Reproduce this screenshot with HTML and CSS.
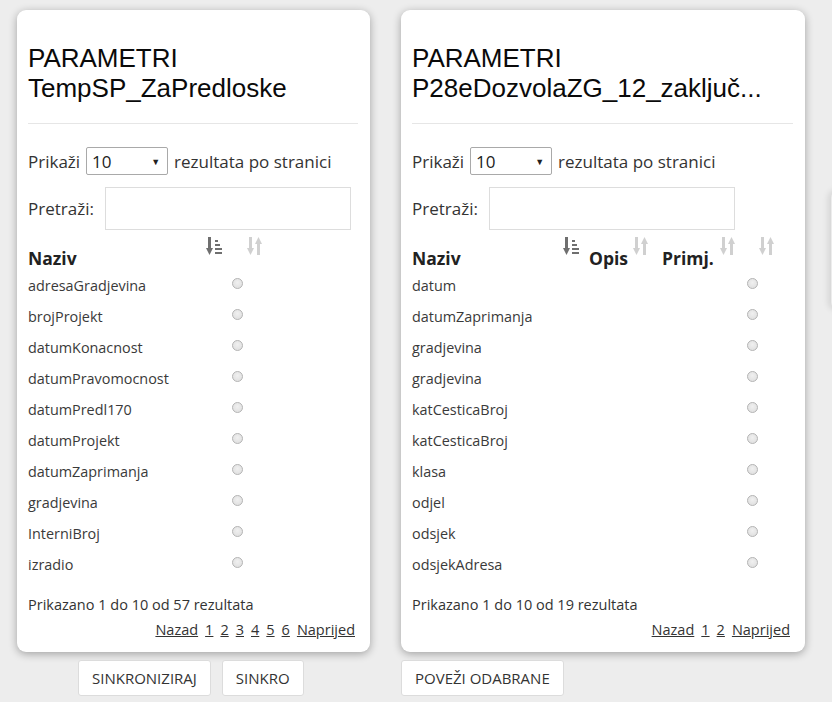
FILE: index.html
```html
<!DOCTYPE html>
<html lang="hr">
<head>
<meta charset="utf-8">
<title>Parametri</title>
<link rel="stylesheet" href="styles.css">
</head>
<body>
<svg width="0" height="0" class="defs">
  <defs>
    <symbol id="i-asc" viewBox="0 0 16 20">
      <rect x="2" y="1" width="3" height="12"/>
      <polygon points="0,12 7,12 3.5,19"/>
      <rect x="9" y="4" width="3" height="2"/>
      <rect x="9" y="8" width="5" height="2"/>
      <rect x="9" y="12" width="7" height="2"/>
      <rect x="9" y="16" width="7" height="2"/>
    </symbol>
    <symbol id="i-both" viewBox="0 0 16 20">
      <rect x="2" y="1" width="3" height="12"/>
      <polygon points="0,12 7,12 3.5,19"/>
      <rect x="10" y="7" width="3" height="12"/>
      <polygon points="8,8 15,8 11.5,1"/>
    </symbol>
  </defs>
</svg>
<div class="page">
  <section class="col col-a">
    <div class="card">
      <h2 class="title"><span class="tl">PARAMETRI</span><span class="tl">TempSP_ZaPredloske</span></h2>
      <hr class="sep">
      <div class="length">Prikaži <span class="select"><span>10</span><span class="caret">▼</span></span> rezultata po stranici</div>
      <div class="search"><span>Pretraži:</span> <span class="input"></span></div>
      <table class="grid grid-a">
        <thead>
          <tr>
            <th class="h-naziv"><div class="hcell"><span class="htext">Naziv</span><svg class="ico dark"><use href="#i-asc"/></svg></div></th>
            <th class="h-sel"><div class="hcell"><span class="htext"></span><svg class="ico light"><use href="#i-both"/></svg></div></th>
          </tr>
        </thead>
        <tbody>
          <tr><td>adresaGradjevina</td><td class="sel"><span class="radio"></span></td></tr>
          <tr><td>brojProjekt</td><td class="sel"><span class="radio"></span></td></tr>
          <tr><td>datumKonacnost</td><td class="sel"><span class="radio"></span></td></tr>
          <tr><td>datumPravomocnost</td><td class="sel"><span class="radio"></span></td></tr>
          <tr><td>datumPredl170</td><td class="sel"><span class="radio"></span></td></tr>
          <tr><td>datumProjekt</td><td class="sel"><span class="radio"></span></td></tr>
          <tr><td>datumZaprimanja</td><td class="sel"><span class="radio"></span></td></tr>
          <tr><td>gradjevina</td><td class="sel"><span class="radio"></span></td></tr>
          <tr><td>InterniBroj</td><td class="sel"><span class="radio"></span></td></tr>
          <tr><td>izradio</td><td class="sel"><span class="radio"></span></td></tr>
        </tbody>
      </table>
      <div class="info">Prikazano 1 do 10 od 57 rezultata</div>
      <div class="pager"><a href="#">Nazad</a><a href="#">1</a><a href="#">2</a><a href="#">3</a><a href="#">4</a><a href="#">5</a><a href="#">6</a><a href="#">Naprijed</a></div>
    </div>
    <div class="actions actions-center">
      <button class="btn">SINKRONIZIRAJ</button>
      <button class="btn">SINKRO</button>
    </div>
  </section>

  <section class="col col-b">
    <div class="card">
      <h2 class="title"><span class="tl">PARAMETRI</span><span class="tl">P28eDozvolaZG_12_zaključ...</span></h2>
      <hr class="sep">
      <div class="length">Prikaži <span class="select"><span>10</span><span class="caret">▼</span></span> rezultata po stranici</div>
      <div class="search"><span>Pretraži:</span> <span class="input"></span></div>
      <table class="grid grid-b">
        <thead>
          <tr>
            <th class="h-naziv"><div class="hcell"><span class="htext">Naziv</span><svg class="ico dark"><use href="#i-asc"/></svg></div></th>
            <th class="h-opis"><div class="hcell"><span class="htext">Opis</span><svg class="ico light"><use href="#i-both"/></svg></div></th>
            <th class="h-primj"><div class="hcell"><span class="htext">Primj.</span><svg class="ico light"><use href="#i-both"/></svg></div></th>
            <th class="h-sel"><div class="hcell"><span class="htext"></span><svg class="ico light"><use href="#i-both"/></svg></div></th>
          </tr>
        </thead>
        <tbody>
          <tr><td>datum</td><td></td><td></td><td class="sel"><span class="radio"></span></td></tr>
          <tr><td>datumZaprimanja</td><td></td><td></td><td class="sel"><span class="radio"></span></td></tr>
          <tr><td>gradjevina</td><td></td><td></td><td class="sel"><span class="radio"></span></td></tr>
          <tr><td>gradjevina</td><td></td><td></td><td class="sel"><span class="radio"></span></td></tr>
          <tr><td>katCesticaBroj</td><td></td><td></td><td class="sel"><span class="radio"></span></td></tr>
          <tr><td>katCesticaBroj</td><td></td><td></td><td class="sel"><span class="radio"></span></td></tr>
          <tr><td>klasa</td><td></td><td></td><td class="sel"><span class="radio"></span></td></tr>
          <tr><td>odjel</td><td></td><td></td><td class="sel"><span class="radio"></span></td></tr>
          <tr><td>odsjek</td><td></td><td></td><td class="sel"><span class="radio"></span></td></tr>
          <tr><td>odsjekAdresa</td><td></td><td></td><td class="sel"><span class="radio"></span></td></tr>
        </tbody>
      </table>
      <div class="info">Prikazano 1 do 10 od 19 rezultata</div>
      <div class="pager"><a href="#">Nazad</a><a href="#">1</a><a href="#">2</a><a href="#">Naprijed</a></div>
    </div>
    <div class="actions">
      <button class="btn">POVEŽI ODABRANE</button>
    </div>
  </section>
  <div class="peek"></div>
</div>
</body>
</html>
```

FILE: styles.css
```css
* { box-sizing: border-box; }
html, body { margin: 0; padding: 0; }
body {
  background: #ededed;
  font-family: "Open Sans", "Noto Sans", "Liberation Sans", sans-serif;
  color: #333;
  overflow: hidden;
  width: 832px;
  height: 702px;
}
.defs { position: absolute; width: 0; height: 0; }
.page {
  display: flex;
  align-items: flex-start;
  gap: 31px;
  padding: 10px 0 0 17px;
}
.col { display: flex; flex-direction: column; flex: none; }
.col-a { width: 353px; }
.col-b { width: 404px; }
.peek {
  flex: none;
  width: 40px;
  height: 120px;
  margin-top: 180px;
  margin-left: -5px;
  background: #ededed;
  border-radius: 8px;
  box-shadow: -3px 0 6px rgba(0,0,0,0.10);
}

.card {
  background: #fff;
  border-radius: 9px;
  box-shadow: 0 2px 9px rgba(0,0,0,0.32);
  padding: 33px 12px 12px 11px;
  height: 642px;
  display: flex;
  flex-direction: column;
}
.title {
  margin: 0;
  font-family: "Liberation Sans", Arial, sans-serif;
  font-weight: 400;
  font-size: 26px;
  line-height: 30px;
  color: #0a0a0a;
  white-space: nowrap;
  display: flex;
  flex-direction: column;
}
.tl {
  display: block;
  height: 30px;
  line-height: 30px;
}
.sep {
  border: 0;
  border-top: 1px solid #e6e6e6;
  margin: 20px 0 0 0;
  height: 0;
}
.length {
  margin-top: 23px;
  display: flex;
  align-items: center;
  gap: 6px;
  font-size: 17px;
  color: #333;
  height: 28px;
}
.select {
  width: 82px;
  height: 28px;
  border: 1px solid #a9a9a9;
  border-radius: 2px;
  display: flex;
  align-items: center;
  justify-content: space-between;
  padding: 0 7px 0 5px;
  font-size: 17px;
  color: #222;
}
.caret { font-size: 9px; color: #222; }
.search {
  margin-top: 12px;
  display: flex;
  align-items: center;
  gap: 11px;
  font-size: 17px;
  color: #333;
}
.input {
  width: 246px;
  height: 43px;
  border: 1px solid #ddd;
  background: #fff;
}
.grid {
  margin-top: 6px;
  border-collapse: collapse;
  table-layout: fixed;
}
.grid-a { width: 238px; }
.grid-b { width: 366px; }
.grid th {
  padding: 0;
  text-align: left;
  vertical-align: top;
  height: 34px;
}
.hcell {
  display: flex;
  justify-content: space-between;
  align-items: flex-start;
  height: 34px;
  padding-right: 3px;
}
.htext {
  align-self: flex-end;
  font-size: 17.5px;
  font-weight: 700;
  color: #222;
  line-height: 22px;
  margin-bottom: 1px;
}
.ico { width: 16px; height: 20px; flex: none; }
.ico.dark { fill: #6f6f6f; }
.ico.light { fill: #d0d0d0; }
.grid td {
  padding: 0;
  height: 31px;
  font-size: 14.4px;
  color: #3a3a3a;
  vertical-align: middle;
  white-space: nowrap;
}
.grid td.sel { padding-bottom: 4px; }
.radio {
  display: block;
  width: 11px;
  height: 11px;
  border-radius: 50%;
  border: 1px solid #b5b5b5;
  background: radial-gradient(circle at 50% 40%, #f0f0f0 0%, #dcdcdc 100%);
}
.grid-a .h-naziv { width: 197px; }
.grid-a .h-sel { width: 41px; }
.grid-a td.sel { padding-left: 7px; }

.grid-b .h-naziv { width: 170px; }
.grid-b .h-opis { width: 68px; }
.grid-b .h-primj { width: 86px; }
.grid-b .h-sel { width: 42px; }
.grid-b .h-opis .hcell { justify-content: flex-start; gap: 5px; padding-left: 7px; }
.grid-b .h-primj .hcell { justify-content: flex-start; gap: 6px; padding-left: 12px; }
.grid-b td.sel { padding-left: 11px; }

.info {
  margin-top: auto;
  font-size: 14.5px;
  color: #333;
  line-height: 18px;
  padding-bottom: 2px;
}
.pager {
  margin-top: 4px;
  margin-right: 3px;
  display: flex;
  justify-content: flex-end;
  gap: 7px;
  font-size: 14.5px;
  line-height: 20px;
}
.pager a { color: #333; text-decoration: underline; }

.actions {
  margin-top: 8px;
  display: flex;
  gap: 11px;
}
.actions-center { padding-left: 61px; }
.btn {
  height: 36px;
  background: #fff;
  border: 1px solid #dcdcdc;
  border-radius: 3px;
  padding: 0 13px;
  font-family: inherit;
  font-size: 15px;
  color: #333;
}
```
